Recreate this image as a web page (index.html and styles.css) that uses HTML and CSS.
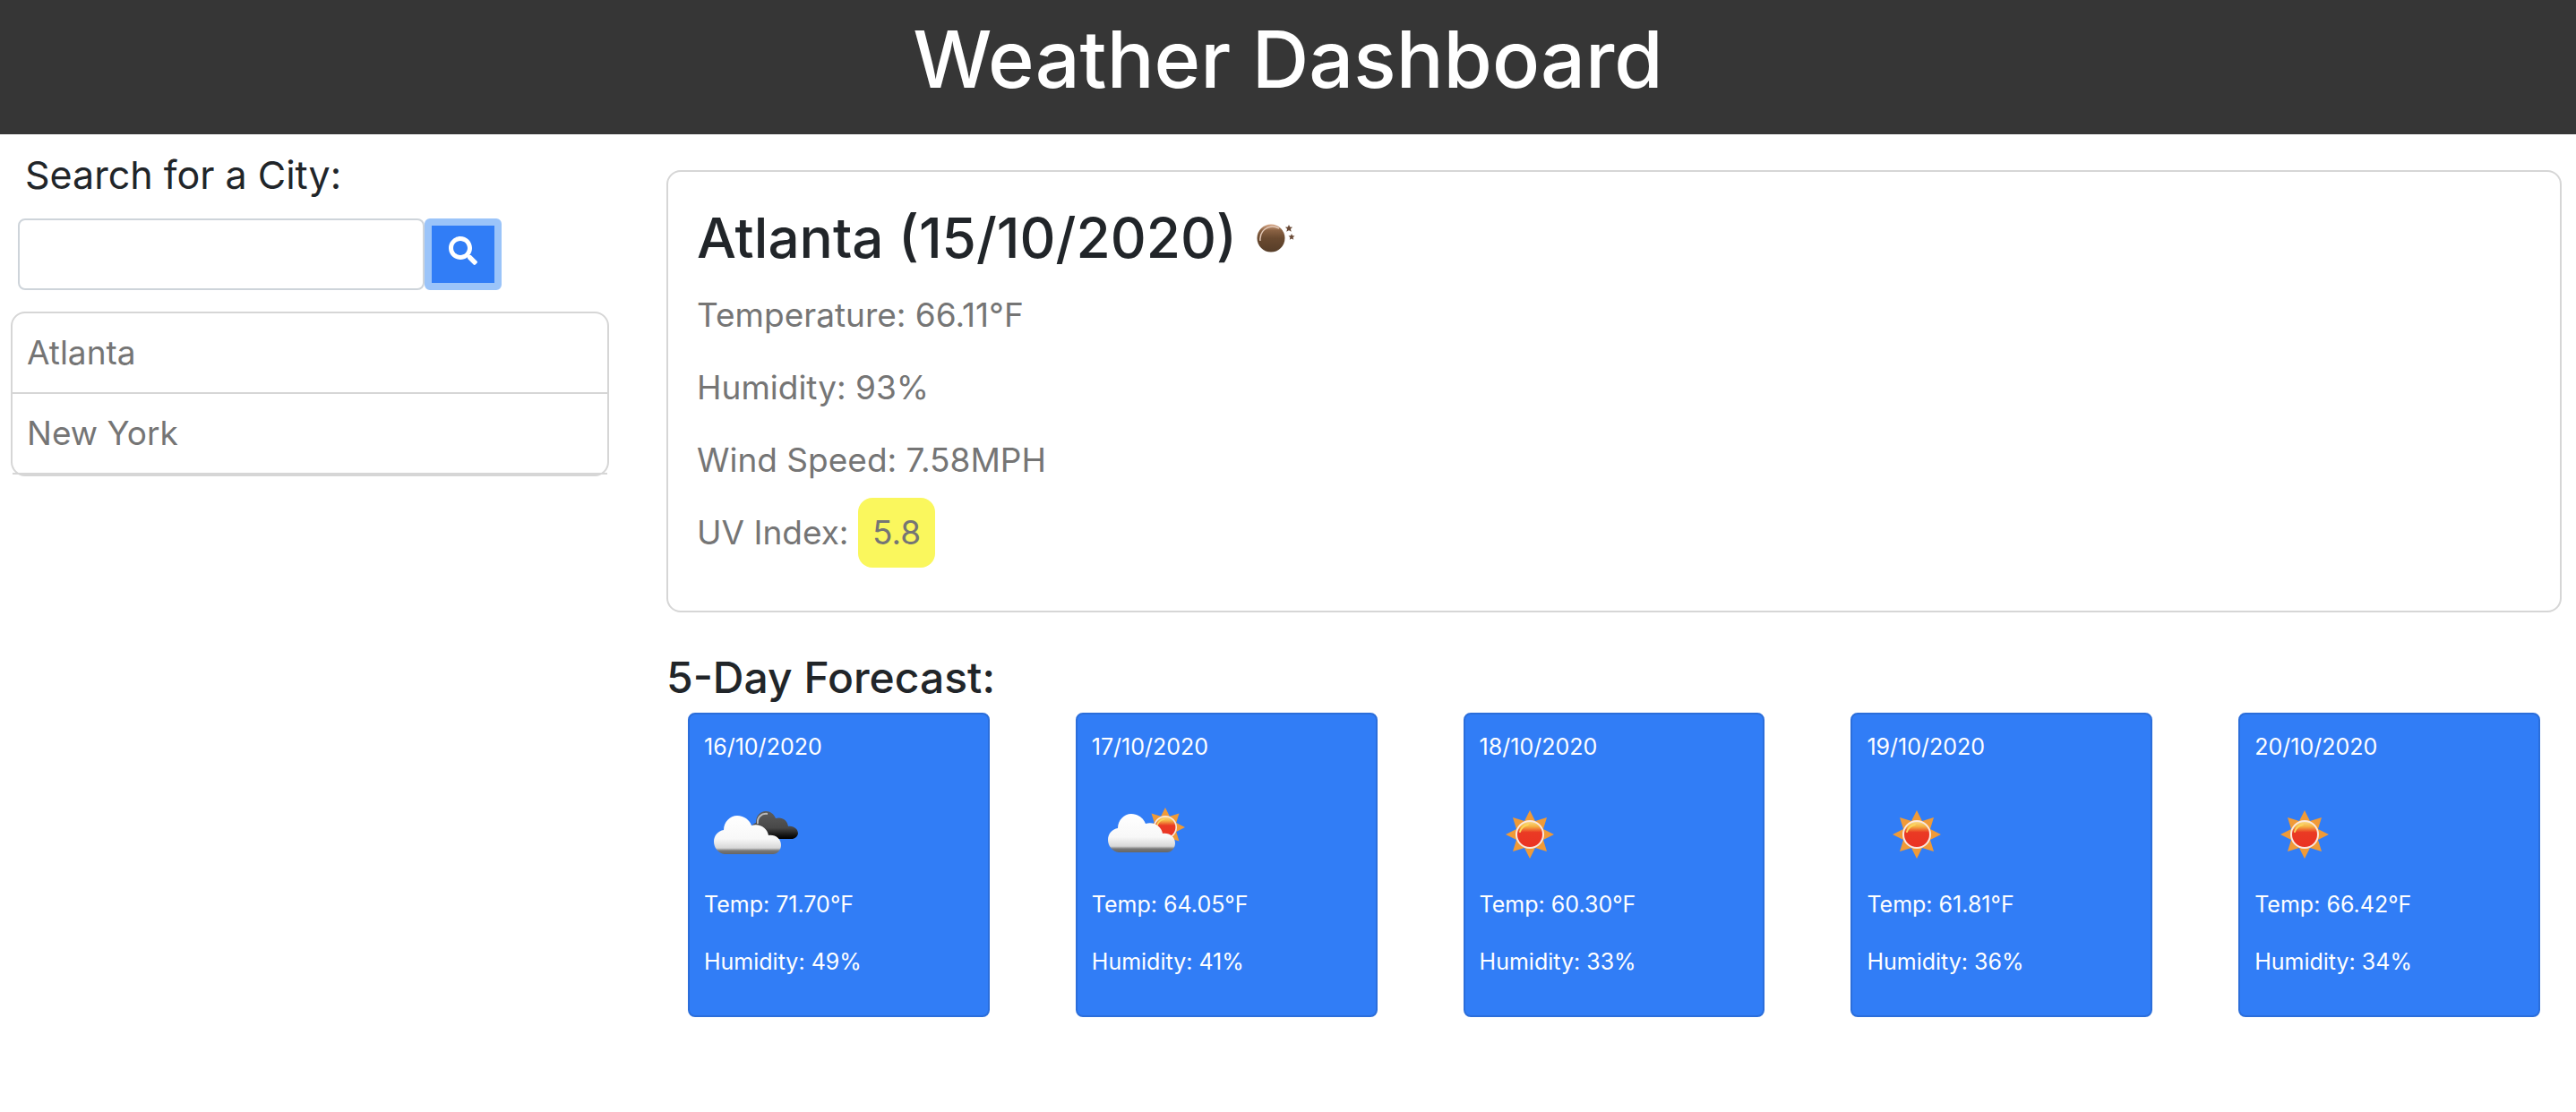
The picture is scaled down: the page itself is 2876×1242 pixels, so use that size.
FILE: index.html
```html
<!DOCTYPE html>
<html lang="en">
<head>
<meta charset="utf-8">
<meta name="viewport" content="width=device-width, initial-scale=1">
<title>Weather Dashboard</title>
<link rel="stylesheet" href="styles.css">
</head>
<body>
<svg class="defs" aria-hidden="true">
  <defs>
    <linearGradient id="sun-fill" x1="0" y1="0" x2="0" y2="1">
      <stop offset="0" stop-color="#fbe08a"/><stop offset=".2" stop-color="#f5b344"/><stop offset=".42" stop-color="#ea3a24"/><stop offset="1" stop-color="#ea3223"/>
    </linearGradient>
    <linearGradient id="cloud-fill" x1="0" y1="0" x2="0" y2="1">
      <stop offset="0" stop-color="#fff"/><stop offset=".6" stop-color="#f8f8f8"/><stop offset=".84" stop-color="#d8d8d8"/><stop offset=".91" stop-color="#777"/><stop offset="1" stop-color="#666"/>
    </linearGradient>
    <linearGradient id="dark-fill" x1="0" y1="0" x2="0" y2="1">
      <stop offset="0" stop-color="#5c5c5c"/><stop offset=".6" stop-color="#484848"/><stop offset=".88" stop-color="#111"/><stop offset="1" stop-color="#000"/>
    </linearGradient>
    <linearGradient id="moon-fill" x1="0" y1="0" x2="0" y2="1">
      <stop offset="0" stop-color="#d9a98a"/><stop offset=".22" stop-color="#8a6243"/><stop offset=".5" stop-color="#6a4a30"/><stop offset="1" stop-color="#563d28"/>
    </linearGradient>
    <symbol id="sun" viewBox="-27 -27 54 54">
      <path fill="#f09a37" d="M0-27 6-15 19-19 15-6 27 0 15 6 19 19 6 15 0 27-6 15-19 19-15 6-27 0-15-6-19-19-6-15Z"/>
      <circle r="15" fill="url(#sun-fill)" stroke="#fbe9df" stroke-width="2"/>
      <path d="M-11-3A12 12 0 0 1-2-11" fill="none" stroke="#fbd65c" stroke-width="2" stroke-linecap="round"/>
    </symbol>
    <symbol id="cloud" viewBox="0 0 75 43">
      <path fill="url(#cloud-fill)" d="M12 43C5 42 0 36 0 29 0 22 5 17 11 16 11 7 18 0 26 0 34 0 40 5 42 11 51 8 60 14 61 22 69 21 75 26 75 33 75 38 71 43 66 43Z"/>
    </symbol>
    <symbol id="dark-cloud" viewBox="0 0 56 31">
      <path fill="url(#dark-fill)" d="M10 31C4 29 1 24 3 19 4 16 6 14 9 13 9 5 14 0 20 0 25 0 29 3 31 8 38 6 44 10 45 17 51 16 56 20 56 25 55 29 52 31 48 31Z"/>
      <path d="M11 14C10 7 15 2 22 3" fill="none" stroke="#bbb" stroke-width="2"/>
    </symbol>
  </defs>
</svg>
<header class="site-header"><h1>Weather Dashboard</h1></header>
<div class="layout">
  <aside class="sidebar">
    <form class="search">
      <label class="search-title" for="city">Search for a City:</label>
      <div class="search-row">
        <input class="search-input" id="city" type="text">
        <button class="search-button" type="button" aria-label="Search">
          <svg viewBox="0 0 512 512" aria-hidden="true"><path fill="currentColor" d="M505 442.700 405.300 343c-4.500-4.500-10.600-7-17-7H372c27.600-35.300 44-79.700 44-128C416 93.100 322.900 0 208 0S0 93.100 0 208s93.100 208 208 208c48.300 0 92.700-16.400 128-44v16.300c0 6.400 2.500 12.500 7 17l99.700 99.700c9.400 9.400 24.600 9.400 33.900 0l28.300-28.300c9.400-9.400 9.400-24.600.1-34zM208 336c-70.700 0-128-57.200-128-128 0-70.700 57.200-128 128-128 70.700 0 128 57.200 128 128 0 70.700-57.200 128-128 128z"/></svg>
        </button>
      </div>
    </form>
    <ul class="history">
      <li>Atlanta</li>
      <li>New York</li>
    </ul>
  </aside>
  <main class="main">
    <section class="current">
      <h2 class="current-title">Atlanta (15/10/2020)
        <svg class="moon" viewBox="0 0 44 32" role="img" aria-label="Clear night">
          <circle cx="16" cy="16" r="15.500" fill="url(#moon-fill)"/>
          <path d="M4 19C3 11 8 4 17 3 20 2.700 23 4 25 5" fill="none" stroke="#e2c9b8" stroke-width="1.500"/>
          <path fill="#6a4a36" d="m36 1 1.200 2.600 2.900.2-2.200 2 .8 3-2.700-1.600-2.700 1.600.8-3-2.200-2 2.900-.2ZM39 11l1 2.300 2.500.2-1.900 1.700.6 2.500-2.200-1.300-2.200 1.300.6-2.500-1.900-1.700 2.500-.2Z"/>
        </svg>
      </h2>
      <p>Temperature: 66.11°F</p>
      <p>Humidity: 93%</p>
      <p>Wind Speed: 7.58MPH</p>
      <p>UV Index: <span class="uv">5.8</span></p>
    </section>
    <section class="forecast">
      <h3 class="forecast-title">5-Day Forecast:</h3>
      <div class="days">
        <article class="day">
          <p class="date">16/10/2020</p>
          <svg class="icon" viewBox="0 0 112 100" role="img" aria-label="Broken clouds"><use href="#dark-cloud" x="49" y="24" width="56" height="31"/><use href="#cloud" x="11" y="29" width="75" height="43"/></svg>
          <p class="temp">Temp: 71.70°F</p>
          <p>Humidity: 49%</p>
        </article>
        <article class="day">
          <p class="date">17/10/2020</p>
          <svg class="icon" viewBox="0 0 112 100" role="img" aria-label="Few clouds"><use href="#sun" x="60" y="20" width="44" height="44"/><use href="#cloud" x="18" y="27" width="75" height="43"/></svg>
          <p class="temp">Temp: 64.05°F</p>
          <p>Humidity: 41%</p>
        </article>
        <article class="day">
          <p class="date">18/10/2020</p>
          <svg class="icon" viewBox="0 0 112 100" role="img" aria-label="Clear sky"><use href="#sun" x="29" y="23" width="54" height="54"/></svg>
          <p class="temp">Temp: 60.30°F</p>
          <p>Humidity: 33%</p>
        </article>
        <article class="day">
          <p class="date">19/10/2020</p>
          <svg class="icon" viewBox="0 0 112 100" role="img" aria-label="Clear sky"><use href="#sun" x="29" y="23" width="54" height="54"/></svg>
          <p class="temp">Temp: 61.81°F</p>
          <p>Humidity: 36%</p>
        </article>
        <article class="day">
          <p class="date">20/10/2020</p>
          <svg class="icon" viewBox="0 0 112 100" role="img" aria-label="Clear sky"><use href="#sun" x="29" y="23" width="54" height="54"/></svg>
          <p class="temp">Temp: 66.42°F</p>
          <p>Humidity: 34%</p>
        </article>
      </div>
    </section>
  </main>
</div>
</body>
</html>
```
FILE: styles.css
```css
*, *::before, *::after { box-sizing: border-box; }

body {
  margin: 0;
  background: #fff;
  color: #212529;
  font-family: Inter, "Liberation Sans", sans-serif;
  font-size: 37px;
  line-height: 60px;
}

h1, h2, h3, p, ul { margin: 0; padding: 0; }

.defs { position: absolute; width: 0; height: 0; }

.site-header {
  padding: 8px 16px 26px;
  background: #363636;
  color: #fff;
  text-align: center;
}

.site-header h1 {
  font-size: 88px;
  font-weight: 500;
  line-height: 116px;
}

.layout {
  display: grid;
  grid-template-columns: 1fr 3fr;
}

.sidebar { padding: 16px 39px 0 12px; }

.search { padding-left: 8px; }

.search-title {
  display: block;
  padding-left: 8px;
  font-size: 43px;
  line-height: 58px;
}

.search-row {
  display: flex;
  height: 80px;
  margin: 20px 0 24px;
}

.search-input {
  width: 454px;
  padding: 12px 24px;
  border: 2px solid #ced4da;
  border-radius: 8px;
  font: inherit;
}

.search-button {
  display: flex;
  justify-content: center;
  width: 86px;
  padding: 12px 0;
  border: 8px solid #9bc4f9;
  border-radius: 6px;
  background: #317df6;
  background-clip: padding-box;
  color: #fff;
}

.search-button svg { width: 32px; height: 32px; }

.history {
  border: 2px solid #d6d6d6;
  border-radius: 16px;
  color: #757575;
  list-style: none;
}

.history li {
  padding: 14px 16px;
  border-bottom: 2px solid #d6d6d6;
}

.main { padding: 40px 16px 0 25px; }

.current {
  padding: 36px 32px 57px;
  border: 2px solid #d6d6d6;
  border-radius: 16px;
  color: #757575;
}

.current-title {
  display: flex;
  align-items: center;
  gap: 22px;
  margin-bottom: 18px;
  color: #212529;
  font-size: 62px;
  font-weight: 500;
  line-height: 76px;
}

.moon { width: 44px; height: 32px; }

.current p { height: 60px; }
.current p + p { margin-top: 21px; }

.uv {
  display: inline-block;
  margin: -9px 0;
  padding: 9px 16px;
  border-radius: 16px;
  background: #faf75d;
}

.forecast { padding-top: 42px; }

.forecast-title {
  margin-bottom: 8px;
  font-size: 48px;
  font-weight: 500;
  line-height: 62px;
}

.days {
  display: grid;
  grid-template-columns: repeat(5, 1fr);
  gap: 96px;
  padding: 0 24px;
}

.day {
  padding: 16px 16px 40px;
  border: 2px solid #2b6edb;
  border-radius: 8px;
  background: #317df6;
  color: #fff;
  font-size: 25px;
  line-height: 40px;
}

.icon {
  display: block;
  width: 112px;
  height: 100px;
  margin: 28px 0 8px;
}

.temp { margin-bottom: 24px; }
```
